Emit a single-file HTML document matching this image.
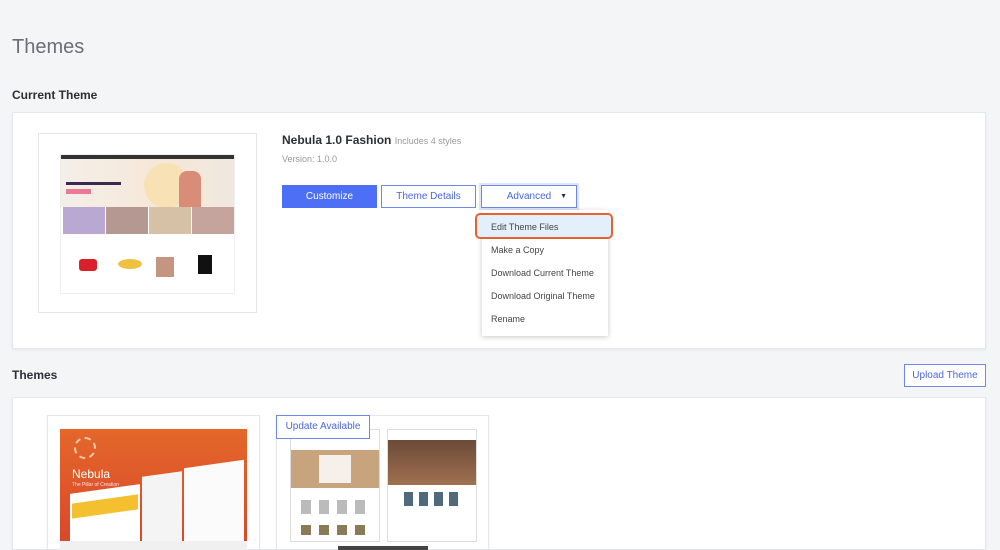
<!DOCTYPE html>
<html style="width:1000px;height:550px;overflow:hidden"><head><meta charset="utf-8"><style>
*{margin:0;padding:0;box-sizing:border-box}
html,body{width:1000px;height:550px;overflow:hidden}
body{background:#f4f5f7;font-family:"Liberation Sans",sans-serif;position:relative;color:#313440}
.a{position:absolute}
.card{background:#fff;border:1px solid #e5e7ec;box-shadow:0 1px 2px rgba(0,0,0,.06)}
.btn{position:absolute;height:23px;font-size:10px;display:flex;align-items:center;justify-content:center;border:1px solid #6f87ea;color:#4b66dd;background:#fff;line-height:1}
.item{position:absolute;left:491px;font-size:9px;color:#444}
</style></head><body>
<div class="a" style="left:12px;top:36px;font-size:20px;color:#6b6e78;font-weight:300">Themes</div>
<div class="a" style="left:12px;top:88px;font-size:12px;font-weight:bold;color:#2d2f36">Current Theme</div>
<div class="a card" style="left:12px;top:112px;width:974px;height:237px"></div>
<div class="a" style="left:38px;top:133px;width:219px;height:180px;border:1px solid #e6e6e6;background:#fff"></div>
<div class="a" style="left:60px;top:154px;width:175px;height:140px;background:#fff;overflow:hidden;border:1px solid #eee">
 <div class="a" style="left:0;top:0;width:175px;height:4px;background:#333"></div>
 <div class="a" style="left:0;top:4px;width:175px;height:48px;background:linear-gradient(90deg,#f4efe9,#f6e7d6 60%,#efe8e0)"></div>
 <div class="a" style="left:83px;top:8px;width:45px;height:45px;border-radius:50%;background:#f8e2b5"></div>
 <div class="a" style="left:118px;top:16px;width:22px;height:36px;background:#d98d78;border-radius:8px 8px 0 0"></div>
 <div class="a" style="left:5px;top:27px;width:55px;height:3px;background:#3a2a50"></div>
 <div class="a" style="left:5px;top:34px;width:25px;height:5px;background:#ea7a96"></div>
 <div class="a" style="left:2px;top:52px;width:42px;height:27px;background:#b8a8d2"></div>
 <div class="a" style="left:45px;top:52px;width:42px;height:27px;background:#b59892"></div>
 <div class="a" style="left:88px;top:52px;width:42px;height:27px;background:#d7c1a6"></div>
 <div class="a" style="left:131px;top:52px;width:42px;height:27px;background:#c4a49c"></div>
 <div class="a" style="left:18px;top:104px;width:18px;height:12px;background:#d9202b;border-radius:3px"></div>
 <div class="a" style="left:57px;top:104px;width:24px;height:10px;background:#f0c040;border-radius:50%"></div>
 <div class="a" style="left:95px;top:102px;width:18px;height:20px;background:#c49580"></div>
 <div class="a" style="left:137px;top:100px;width:14px;height:19px;background:#111"></div>
</div>
<div class="a" style="left:282px;top:133px;font-size:12px;font-weight:bold;color:#2d2f36">Nebula 1.0 Fashion <span style="font-weight:normal;font-size:9px;color:#999">Includes 4 styles</span></div>
<div class="a" style="left:282px;top:154px;font-size:9px;color:#999">Version: 1.0.0</div>
<div class="btn" style="left:282px;top:185px;width:95px;background:#4d6ff5;border-color:#4d6ff5;color:#fff">Customize</div>
<div class="btn" style="left:381px;top:185px;width:95px">Theme Details</div>
<div class="btn" style="left:481px;top:185px;width:96px;box-shadow:0 0 0 2px #dfe5fb">Advanced<span style="position:absolute;right:9px;font-size:7px;color:#333">▼</span></div>
<div class="a" style="left:482px;top:210px;width:126px;height:126px;background:#fff;box-shadow:0 1px 5px rgba(0,0,0,.22)"></div>
<div class="a" style="left:475px;top:213px;width:138px;height:26px;border:2px solid #e8622e;border-radius:5px;background:#e3effa"></div>
<div class="item" style="top:222px">Edit Theme Files</div>
<div class="item" style="top:245px">Make a Copy</div>
<div class="item" style="top:268px">Download Current Theme</div>
<div class="item" style="top:291px">Download Original Theme</div>
<div class="item" style="top:314px">Rename</div>
<div class="a" style="left:12px;top:368px;font-size:12px;font-weight:bold;color:#2d2f36">Themes</div>
<div class="btn" style="left:904px;top:364px;width:82px;height:23px">Upload Theme</div>
<div class="a card" style="left:12px;top:397px;width:974px;height:153px"></div>
<div class="a card" style="left:47px;top:415px;width:213px;height:135px"></div>
<div class="a" style="left:60px;top:429px;width:187px;height:121px;background:linear-gradient(180deg,#e4672a,#d8462a);overflow:hidden">
 <div class="a" style="left:14px;top:8px;width:22px;height:22px;border:2px dashed #f8c9a8;border-radius:50%"></div>
 <div class="a" style="left:12px;top:38px;color:#fff;font-size:12px">Nebula</div>
 <div class="a" style="left:12px;top:53px;color:#fde;font-size:5px">The Pillar of Creation</div>
 <div class="a" style="left:10px;top:60px;width:70px;height:80px;background:#fff;transform:skewY(-8deg)"></div>
 <div class="a" style="left:12px;top:70px;width:66px;height:15px;background:#f4c030;transform:skewY(-8deg)"></div>
 <div class="a" style="left:82px;top:45px;width:40px;height:90px;background:#f4f4f4;transform:skewY(-8deg)"></div>
 <div class="a" style="left:124px;top:35px;width:60px;height:100px;background:#fbfbfb;transform:skewY(-8deg)"></div>
 <div class="a" style="left:0;top:112px;width:187px;height:9px;background:#f0f0f0"></div>
</div>
<div class="a card" style="left:276px;top:415px;width:213px;height:135px"></div>
<div class="a" style="left:290px;top:429px;width:90px;height:113px;border:1px solid #ddd;background:#fff">
 <div class="a" style="left:0;top:20px;width:88px;height:38px;background:#c8a47e"></div>
 <div class="a" style="left:28px;top:25px;width:32px;height:28px;background:#f5f0ea"></div>
 <div class="a" style="left:10px;top:70px;width:66px;height:14px;background:repeating-linear-gradient(90deg,#bbb 0 10px,#fff 10px 18px)"></div>
 <div class="a" style="left:10px;top:95px;width:66px;height:10px;background:repeating-linear-gradient(90deg,#8a7a55 0 10px,#fff 10px 18px)"></div>
</div>
<div class="a" style="left:387px;top:429px;width:90px;height:113px;border:1px solid #ddd;background:#fff">
 <div class="a" style="left:0;top:10px;width:88px;height:45px;background:linear-gradient(180deg,#6b4a38,#a07050)"></div>
 <div class="a" style="left:16px;top:62px;width:56px;height:14px;background:repeating-linear-gradient(90deg,#4f6a7a 0 9px,#fff 9px 15px)"></div>
</div>
<div class="a" style="left:338px;top:546px;width:90px;height:4px;background:#444"></div>
<div class="btn" style="left:276px;top:415px;width:94px;height:24px;font-size:10px;background:#fff">Update Available</div>
</body></html>
